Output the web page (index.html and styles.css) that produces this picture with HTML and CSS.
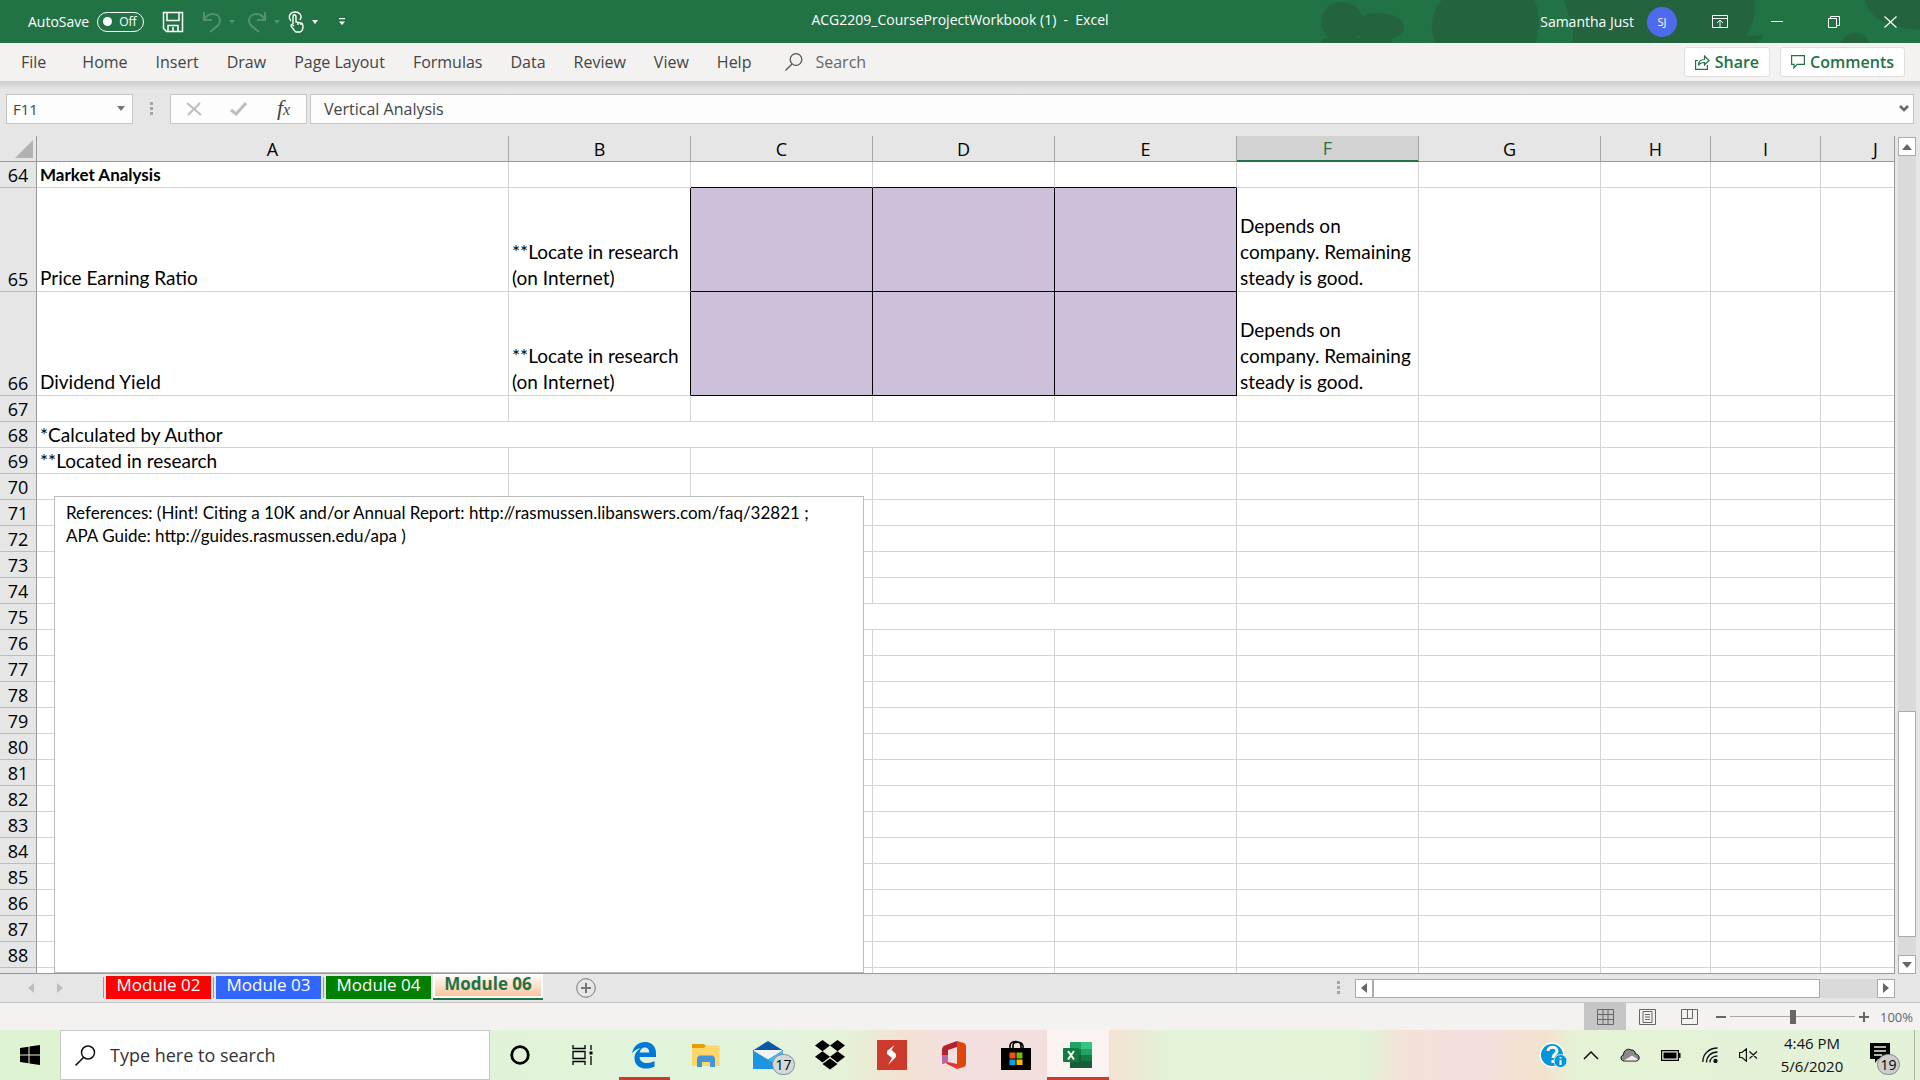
FILE: index.html
```html
<!DOCTYPE html>
<html lang="en">
<head>
<meta charset="utf-8">
<title>ACG2209_CourseProjectWorkbook (1) - Excel</title>
<link rel="stylesheet" href="styles.css">
</head>
<body>
<header class="titlebar">
  <div class="quick">
    <label class="autosave">AutoSave <span class="toggle"><input type="checkbox" class="toggle-input"><span class="knob"></span>Off</span></label>
    <button class="tool" aria-label="Save"><svg width="22" height="22" viewBox="0 0 22 22" fill="none" stroke="#fff" stroke-width="1.500"><path d="M1.500 1.500h19v19h-16l-3-3zM5 1.500v8h12v-8M6 20.500v-6h10v6M11 16v4"/></svg></button>
    <button class="tool faded undo" aria-label="Undo"><svg width="20" height="22" viewBox="0 0 20 22" fill="none" stroke="#fff" stroke-width="2"><path d="M2 1v8h8M2 9c4-8 16-8 16 1 0 4-4 6-10 11"/></svg></button>
    <span class="caret faded"></span>
    <button class="tool faded redo" aria-label="Redo"><svg width="20" height="22" viewBox="0 0 20 22" fill="none" stroke="#fff" stroke-width="2"><path d="M18 1v8h-8M18 9C14 1 2 1 2 10c0 4 4 6 10 11"/></svg></button>
    <span class="caret faded"></span>
    <button class="tool touch" aria-label="Touch mode"><svg width="17" height="22" viewBox="0 0 17 22" fill="none" stroke="#fff" stroke-width="1.400"><path d="M3 10C-1 5 3 1 7 1s8 3 5 8M5 13V6c0-3 3-3 3 0v5l5 1c2 0 2 2 2 4 0 3-2 5-3 5H8c-2-1-3-4-5-6 0-2 1-2 3 0M10 11v3M13 12v2"/></svg></button>
    <span class="caret"></span>
    <button class="tool customize" aria-label="Customize toolbar"><svg width="6" height="8" viewBox="0 0 6 8" fill="#fff"><path d="M0 0h6v1.200H0zM0 3.500h6L3 7z"/></svg></button>
  </div>
  <h1 class="doc-title">ACG2209_CourseProjectWorkbook (1)&nbsp; -&nbsp; Excel</h1>
  <div class="account">
    <svg class="pattern" width="640" height="43" viewBox="0 0 640 43" aria-hidden="true"><g fill="#23643f"><ellipse cx="62" cy="22" rx="21" ry="20"/><ellipse cx="98" cy="27" rx="26" ry="14"/><path d="M44 38h68v5H40z"/><path d="M156 43c-8-12-4-34 6-43h92c8 14 4 30 2 43z"/><path d="M292 43c4-10-4-27-8-43h190c3 16-3 26-8 36l18-1-6 8z"/><path d="M560 43c8-14 22-14 30 0z"/><path d="M585 0c4 20 26 28 55 30V0z"/></g></svg>
    <span class="user">Samantha Just</span>
    <span class="avatar">SJ</span>
    <button class="win" aria-label="Ribbon display options"><svg width="16" height="14" viewBox="0 0 16 14" fill="none" stroke="#fff"><path d="M.5.5h15v12H.5zM.5 3.500h15M8 12V5M5 8l3-3 3 3"/></svg></button>
    <button class="win" aria-label="Minimize"><svg width="12" height="12" viewBox="0 0 12 12" stroke="#fff"><path d="M0 5.500h12"/></svg></button>
    <button class="win" aria-label="Restore"><svg width="12" height="12" viewBox="0 0 12 12" fill="none" stroke="#fff"><path d="M.5 2.500h8v9h-8zM2.500 2V.5h9v9H9"/></svg></button>
    <button class="win" aria-label="Close"><svg width="13" height="12" viewBox="0 0 13 12" stroke="#fff" stroke-width="1.200"><path d="M.5.5l12 11M12.500.5l-12 11"/></svg></button>
  </div>
</header>

<nav class="ribbon">
  <button class="menu file">File</button><button class="menu">Home</button><button class="menu">Insert</button><button class="menu">Draw</button><button class="menu">Page Layout</button><button class="menu">Formulas</button><button class="menu">Data</button><button class="menu">Review</button><button class="menu">View</button><button class="menu">Help</button>
  <button class="menu find"><svg width="18" height="18" viewBox="0 0 18 18" fill="none" stroke="#555" stroke-width="1.300"><circle cx="11" cy="6.500" r="5.800"/><path d="M7 11l-6.500 6.500"/></svg>Search</button>
  <span class="grow"></span>
  <button class="pill"><svg width="15" height="15" viewBox="0 0 15 15" fill="none" stroke="#217346" stroke-width="1.200"><path d="M3 5.500H.600v8.900h11.800V10M3.500 10.500c0-4 2-6 6-6V1l4.500 4.500L9.500 10V7.500c-3 0-5 1-6 3z"/></svg>Share</button>
  <button class="pill"><svg width="14" height="14" viewBox="0 0 14 14" fill="none" stroke="#217346" stroke-width="1.200"><path d="M.6.6h12.800v8.800H6L3 12.800V9.400H.6z"/></svg>Comments</button>
</nav>

<section class="formula-row">
  <div class="namebox"><input class="name-input" aria-label="Name box" value="F11"><span class="caret dark"></span></div>
  <svg class="grip" width="3" height="14" viewBox="0 0 3 14" fill="#a6a6a6"><path d="M0 0h3v3H0zM0 5h3v3H0zM0 10h3v3H0z"/></svg>
  <div class="fx-box">
    <button class="fx" aria-label="Cancel"><svg width="16" height="14" viewBox="0 0 16 14" stroke="#bdbdbd" stroke-width="2"><path d="M1 1l14 12M14 1L2 13"/></svg></button>
    <button class="fx" aria-label="Enter"><svg width="17" height="14" viewBox="0 0 17 14" fill="none" stroke="#bdbdbd" stroke-width="3"><path d="M1 8l5 4L16 1"/></svg></button>
    <button class="fx italic" aria-label="Insert function">f<span class="sub">x</span></button>
  </div>
  <div class="formula"><input class="formula-input" aria-label="Formula" value="Vertical Analysis"><svg width="10" height="7" viewBox="0 0 10 7" fill="none" stroke="#666" stroke-width="2.600"><path d="M1 1l4 4 4-4"/></svg></div>
</section>

<main class="work">
  <div class="sheet">
    <table class="grid">
      <colgroup><col class="c-head"><col class="c-a"><col class="c-m"><col class="c-m"><col class="c-m"><col class="c-m"><col class="c-m"><col class="c-m"><col class="c-s"><col class="c-s"><col class="c-s"></colgroup>
      <thead><tr><th class="corner"><svg width="18" height="18" viewBox="0 0 18 18" fill="#b2b2b2"><path d="M18 0v18H0z"/></svg></th><th>A</th><th>B</th><th>C</th><th>D</th><th>E</th><th class="current">F</th><th>G</th><th>H</th><th>I</th><th>J</th></tr></thead>
      <tbody id="rows">
        <tr class="above"><th>64</th><td class="bold">Market Analysis</td><td></td><td></td><td></td><td></td><td></td><td></td><td></td><td></td><td></td></tr>
        <tr class="tall"><th>65</th><td>Price Earning Ratio</td><td class="pre">**Locate in research (on Internet)</td><td class="fill"></td><td class="fill"></td><td class="fill"></td><td>Depends on company. Remaining steady is good.</td><td></td><td></td><td></td><td></td></tr>
        <tr class="tall"><th>66</th><td>Dividend Yield</td><td class="pre">**Locate in research (on Internet)</td><td class="fill"></td><td class="fill"></td><td class="fill"></td><td>Depends on company. Remaining steady is good.</td><td></td><td></td><td></td><td></td></tr>
        <tr><th>67</th><td></td><td></td><td></td><td></td><td></td><td></td><td></td><td></td><td></td><td></td></tr>
        <tr><th>68</th><td colspan="5">*Calculated by Author</td><td></td><td></td><td></td><td></td><td></td></tr>
        <tr><th>69</th><td>**Located in research</td><td></td><td></td><td></td><td></td><td></td><td></td><td></td><td></td><td></td></tr>
      </tbody>
    </table>
    <div class="note">References: (Hint! Citing a 10K and/or Annual Report: http://rasmussen.libanswers.com/faq/32821 ;<br>APA Guide: http://guides.rasmussen.edu/apa )</div>
  </div>
  <div class="vscroll">
    <button class="sbtn" aria-label="Scroll up"><svg width="10" height="6" viewBox="0 0 10 6" fill="#666"><path d="M0 6l5-6 5 6z"/></svg></button>
    <div class="vtrack"><div class="vthumb"></div></div>
    <button class="sbtn" aria-label="Scroll down"><svg width="10" height="6" viewBox="0 0 10 6" fill="#666"><path d="M0 0l5 6 5-6z"/></svg></button>
  </div>
</main>

<nav class="tabs">
  <button class="arrow" aria-label="Previous sheet"><svg width="6" height="10" viewBox="0 0 6 10" fill="#bcbcbc"><path d="M6 0v10L0 5z"/></svg></button>
  <button class="arrow" aria-label="Next sheet"><svg width="6" height="10" viewBox="0 0 6 10" fill="#bcbcbc"><path d="M0 0v10l6-5z"/></svg></button>
  <div class="tablist">
    <span class="slot"><button class="tab red">Module 02</button></span><span class="slot"><button class="tab blue">Module 03</button></span><span class="slot"><button class="tab green">Module 04</button></span><button class="tab active">Module 06</button>
  </div>
  <button class="add" aria-label="New sheet"><svg width="20" height="20" viewBox="0 0 20 20" fill="none" stroke="#777"><circle cx="10" cy="10" r="9.300"/><path d="M10 5v10M5 10h10" stroke-width="2"/></svg></button>
  <span class="grow"></span>
  <svg class="grip" width="3" height="14" viewBox="0 0 3 14" fill="#a6a6a6"><path d="M0 0h3v3H0zM0 5h3v3H0zM0 10h3v3H0z"/></svg>
  <div class="hscroll">
    <button class="sbtn" aria-label="Scroll left"><svg width="6" height="10" viewBox="0 0 6 10" fill="#666"><path d="M6 0v10L0 5z"/></svg></button>
    <div class="htrack"><div class="hthumb"></div></div>
    <button class="sbtn" aria-label="Scroll right"><svg width="6" height="10" viewBox="0 0 6 10" fill="#666"><path d="M0 0v10l6-5z"/></svg></button>
  </div>
</nav>

<footer class="status">
  <button class="view on" aria-label="Normal"><svg width="17" height="16" viewBox="0 0 17 16" fill="none" stroke="#666"><path d="M.5.5h16v15H.5zM.5 5.500h16M.5 10.500h16M6 .5v15M11 .5v15"/></svg></button>
  <button class="view" aria-label="Page layout"><svg width="17" height="16" viewBox="0 0 17 16" fill="none" stroke="#666"><path d="M.5.5h16v15H.5zM4 2.500h9v11H4zM6 5.500h5M6 8h5M6 10.500h5"/></svg></button>
  <button class="view" aria-label="Page break preview"><svg width="17" height="16" viewBox="0 0 17 16" fill="none" stroke="#666"><path d="M.5.5h16v15H.5zM6.500.5v9M11.500.5v9M.5 9.500h11"/></svg></button>
  <button class="zoom" aria-label="Zoom out"><svg width="10" height="10" viewBox="0 0 10 10" stroke="#666" stroke-width="2"><path d="M0 5h10"/></svg></button>
  <input class="slider" type="range" min="0" max="100" value="50" aria-label="Zoom">
  <button class="zoom" aria-label="Zoom in"><svg width="10" height="10" viewBox="0 0 10 10" stroke="#666" stroke-width="2"><path d="M0 5h10M5 0v10"/></svg></button>
  <span class="percent">100%</span>
</footer>

<div class="taskbar">
  <button class="start" aria-label="Start"><svg width="20" height="20" viewBox="0 0 20 20"><path d="M0 3l8.500-1.200v7.700H0zM9.500 1.600L20 0v9.500H9.500zM0 10.500h8.500v7.700L0 17zM9.500 10.500H20V20L9.500 18.400z"/></svg></button>
  <label class="search"><svg width="21" height="21" viewBox="0 0 21 21" fill="none" stroke="#111" stroke-width="1.500"><circle cx="13" cy="7.500" r="6.500"/><path d="M8.500 12.500L.6 20.400"/></svg><input class="search-input" placeholder="Type here to search" aria-label="Type here to search"></label>
  <button class="app" aria-label="Cortana"><svg width="20" height="20" viewBox="0 0 20 20" fill="none" stroke="#000" stroke-width="2.800"><circle cx="10" cy="10" r="8.300"/></svg></button>
  <button class="app" aria-label="Task view"><svg width="21" height="20" viewBox="0 0 21 20" fill="none" stroke="#000" stroke-width="1.300"><path d="M1 0v3.500h12V0M1 20v-3.500h12V20M1 6.500h12v7H1zM19 0v5M19 11v9"/><path d="M17.500 6.500h3v3h-3z" fill="#000" stroke="none"/></svg></button>
  <button class="app open" aria-label="Edge"><svg width="26" height="28" viewBox="0 0 26 28" fill="#0078d7"><path d="M1 12.500C2.500 5 7.500 1 14 1c7.500 0 11 5.500 11 11v4H8.500c.3 4 3.500 6 7.500 6 3 0 5.500-.8 7.500-2v5.500C21 27 18 27.600 15 27.600c-7 0-11.500-4-11.500-10.600 0-4.500 2.500-8 6.500-9.800-4 .5-7 2.300-9 5.300zM8.700 11.500h9.600c0-3-1.500-5-4.300-5-3 0-4.800 2-5.300 5z"/></svg></button>
  <button class="app" aria-label="File Explorer"><svg width="28" height="24" viewBox="0 0 28 24"><path d="M0 1h12l2 2v4H0z" fill="#dfa000"/><path d="M0 5h12l2-2.500h13.500V23H0z" fill="#ffd667"/><path d="M5 24v-9l2-2.500h14l2 2.500v9h-5v-5h-8v5z" fill="#4296d8"/></svg></button>
  <button class="app" aria-label="Mail"><svg width="30" height="28" viewBox="0 0 30 28"><path d="M0 9.500L15 0l15 9.500V12H0z" fill="#0a58a5"/><path d="M1 9h28v9H1z" fill="#f4f4f4"/><path d="M0 9.500L15 18.500 30 9.500V28H0z" fill="#1c94e0"/><path d="M30 9.500V28L9 15l6 3.500z" fill="#35bdf3"/></svg><span class="badge">17</span></button>
  <button class="app" aria-label="Dropbox"><svg width="30" height="30" viewBox="0 0 30 30"><path d="M7.500 0L15 5.600 7.500 11.200 0 5.600zM22.500 0L30 5.600l-7.500 5.600L15 5.600zM0 16.800l7.500-5.600 7.500 5.600-7.500 5.600zM22.500 11.200l7.500 5.600-7.500 5.600-7.500-5.600zM7.500 24L15 18.600l7.500 5.400L15 29.600z"/></svg></button>
  <button class="app" aria-label="Reader"><svg width="30" height="30" viewBox="0 0 30 30"><path d="M0 0h30v30H0z" fill="#cb3a2b"/><path d="M17.500 5L10 11v3l5 4-4 7 8-8v-3l-4.500-4z" fill="#fff"/></svg></button>
  <button class="app" aria-label="Office"><svg width="24" height="28" viewBox="0 0 24 28"><path d="M15 0L4 4Q0 5 0 9v12q0 3 3 1l3-2V9l9-3z" fill="#b4212e"/><path d="M0 14v7q0 3 3 1l3-2v-6z" fill="#b768a8"/><path d="M15 0l7 2q2 1 2 3v18q0 2-2 3l-7 2z" fill="#e0480b"/><path d="M6 21l9 2v5L5 23q-3-2 1-2z" fill="#e2363c"/></svg></button>
  <button class="app" aria-label="Microsoft Store"><svg width="30" height="30" viewBox="0 0 30 30"><path d="M9 9V6c0-6 11-6 11 0v3M12 8V5c0-4 9-4 10 1v3" fill="none" stroke="#000" stroke-width="1.600"/><path d="M0 8h30v22H0z"/><path d="M8.500 12.500h6v6h-6z" fill="#f25022"/><path d="M15.500 12.500h6v6h-6z" fill="#7fba00"/><path d="M8.500 19.500h6v5.500h-6z" fill="#00a4ef"/><path d="M15.500 19.500h6v5.500h-6z" fill="#ffb900"/></svg></button>
  <button class="app chosen" aria-label="Excel"><svg width="30" height="28" viewBox="0 0 30 28"><path d="M7 1h11v7H7z" fill="#21a366"/><path d="M18 1h11v7H18z" fill="#33c481"/><path d="M7 8h11v6H7z" fill="#107c41"/><path d="M18 8h11v6H18z" fill="#21a366"/><path d="M7 14h22v13H7z" fill="#185c37"/><path d="M18 14h11v6H18z" fill="#107c41"/><rect y="7" width="16" height="14" rx="1" fill="#107c41"/><path d="M5 10l6 8.500M11 10l-6 8.500" stroke="#fff" stroke-width="2"/></svg></button>
  <span class="grow"></span>
  <div class="tray">
    <svg width="30" height="26" viewBox="0 0 30 26"><circle cx="13" cy="13" r="12.500" fill="#fff"/><circle cx="13" cy="13" r="11" fill="#0095d9"/><path d="M9 9c0-5 9-5 9 0 0 3-4 3-4 7M14 18v3" fill="none" stroke="#fff" stroke-width="3"/><circle cx="21.500" cy="19" r="6.500" fill="#0095d9" stroke="#d7eef7"/><path d="M21.500 15v1.500M21.500 18v5" stroke="#fff" stroke-width="2"/></svg>
    <svg width="16" height="9" viewBox="0 0 16 9" fill="none" stroke="#111" stroke-width="1.500"><path d="M1 8l7-7 7 7"/></svg>
    <svg width="20" height="14" viewBox="0 0 20 14"><path d="M4.500 13C0 13 0 7.500 3.500 7 3.500 2 8 0 11 2c2.500-.5 4 1.500 4.500 4C20 6 20.500 13 16 13z" fill="#8a8a8a" stroke="#111"/><path d="M4 12.400L12 7.500l6 4-2 .9z" fill="#eee"/></svg>
    <svg width="20" height="11" viewBox="0 0 20 11"><path d="M.6.6h16.800v9.800H.6z" fill="none" stroke="#000" stroke-width="1.200"/><path d="M2.500 2.500h13v6h-13zM18 3h1.500v5H18z"/></svg>
    <svg width="16" height="16" viewBox="0 0 16 16" fill="none" stroke="#111" stroke-width="1.300"><path d="M.8 15C.8 7 7 1 15.500 1M4.500 15.500C4.500 9.500 9 5 15.500 5M8 15.500C8 11.500 11 9 15.500 9"/><circle cx="13.500" cy="14" r="1.500" fill="#111"/></svg>
    <svg width="19" height="14" viewBox="0 0 19 14" fill="none" stroke="#111" stroke-width="1.200"><path d="M.6 4.500H3L7.400.8v12.400L3 9.500H.6zM10.500 3.500l7.500 7M18 3.500l-7.500 7"/></svg>
  </div>
  <div class="clock"><span>4:46 PM</span><span>5/6/2020</span></div>
  <button class="notify" aria-label="Notifications"><svg width="20" height="21" viewBox="0 0 20 21"><path d="M0 0h20v16H8l-3 4v-4H0z"/><path d="M4 4h12M4 8h12M4 12h8" stroke="#e4f3da" stroke-width="1.300"/></svg><span class="badge">19</span></button>
</div>
<script src="rows.js"></script>
</body>
</html>
```
FILE: styles.css
```css
* { box-sizing: border-box; }
body { margin: 0; height: 100vh; display: flex; flex-direction: column; overflow: hidden; background: #e6e6e6; font: 16px "Open Sans", "Noto Sans", sans-serif; color: #444; }
button { border: 0; background: none; padding: 0; margin: 0; font: inherit; color: inherit; display: flex; align-items: center; justify-content: center; white-space: nowrap; }
input { font: inherit; color: inherit; border: 0; background: none; padding: 0; margin: 0; min-width: 0; outline: 0; }
svg { display: block; flex: none; }
.grow { flex: 1; }

.titlebar { flex: none; height: 43px; display: grid; grid-template-columns: 1fr auto 1fr; align-items: center; background: #217346; color: #fff; font-size: 14px; }
.quick { display: flex; align-items: center; padding-left: 28px; }
.autosave { display: flex; align-items: center; gap: 8px; }
.toggle { width: 47px; height: 20px; border: 1px solid #fff; border-radius: 10px; display: flex; align-items: center; gap: 7px; padding-left: 5px; font-size: 12px; }
.toggle-input { position: absolute; opacity: 0; }
.knob { width: 9px; height: 9px; border-radius: 50%; background: #fff; }
.tool { margin-left: 18px; }
.redo { margin-left: 12px; }
.touch { margin-left: 8px; }
.customize { margin-left: 21px; }
.faded { opacity: .22; }
.caret { margin-left: 7px; border: 3px solid transparent; border-top: 4px solid currentColor; border-bottom: 0; }
.caret.dark { border-width: 5px 4px 0; color: #777; margin: 0; }
.doc-title { margin: 0; font-size: 14px; font-weight: 400; line-height: 20px; padding-bottom: 3px; }
.account { position: relative; height: 43px; display: flex; align-items: center; justify-content: flex-end; padding-right: 1px; overflow: hidden; }
.account > * { position: relative; }
.account .pattern { position: absolute; right: 0; top: 0; }
.avatar { width: 30px; height: 30px; border-radius: 50%; background: #4f6bed; display: flex; align-items: center; justify-content: center; font-size: 11px; margin: 0 14px 0 13px; }
.win { width: 57px; height: 43px; }

.ribbon { flex: none; height: 38px; display: flex; align-items: center; background: #f3f2f1; padding: 0 15px 0 21px; gap: 28px; }
.file { margin-right: 8px; }
.find { gap: 12px; color: #666; margin-left: 6px; }
.pill { height: 30px; padding: 0 10px; gap: 5px; background: #fff; border: 1px solid #e1dfdd; border-radius: 3px; color: #217346; font-weight: 600; margin-left: -18px; }

.formula-row { flex: none; height: 55px; display: flex; align-items: center; padding: 0 6px; background: linear-gradient(#cdcdcd, #e6e6e6 9px); font-size: 16px; }
.namebox { width: 127px; height: 30px; background: #fdfdfd; border: 1px solid #c6c6c6; display: flex; align-items: center; padding: 0 7px 0 6px; }
.name-input { flex: 1; font-size: 15px; }
.grip { margin: 0 17px; }
.fx-box { width: 137px; height: 30px; background: #fdfdfd; border: 1px solid #c6c6c6; display: flex; }
.fx { flex: 1; }
.italic { font: italic 22px "Liberation Serif", serif; color: #444; padding-bottom: 2px; }
.sub { font-size: 16px; padding-top: 4px; }
.formula { flex: 1; margin-left: 3px; height: 30px; background: #fdfdfd; border: 1px solid #c6c6c6; display: flex; align-items: center; padding: 0 4px 0 13px; }
.formula-input { flex: 1; }

.work { flex: 1; min-height: 0; display: flex; justify-content: space-between; }
.sheet { position: relative; flex: 1; overflow: hidden; border-right: 1px solid #999; border-bottom: 1px solid #999; margin-right: 3px; background: #fff; font: 19px/26px Lato, sans-serif; color: #000; }
.grid { border-collapse: separate; border-spacing: 0; table-layout: fixed; width: 1931px; }
.c-head { width: 37px; }
.c-a { width: 472px; }
.c-m { width: 182px; }
.c-s { width: 110px; }
.grid th { font: 18px/24px "Open Sans", sans-serif; padding: 0; height: 26px; background: #e6e6e6; border-right: 1px solid #a6a6a6; border-bottom: 1px solid #999; text-align: center; }
.grid tbody th { vertical-align: bottom; border-right-color: #999; border-bottom-color: #bcbcbc; }
.grid .current { background: #d2d2d2; color: #217346; border-bottom: 2px solid #217346; }
.grid .corner { border-right-color: #999; }
.corner svg { margin-left: 15px; }
.grid td { height: 26px; padding: 0 0 0 3px; line-height: 25px; vertical-align: bottom; border-right: 1px solid #d4d4d4; border-bottom: 1px solid #d4d4d4; white-space: nowrap; }
.grid .tall td { height: 104px; white-space: normal; line-height: 26px; }
.grid .fill { background: #ccc0da; border-color: #000; }
.grid .bold { font-weight: 700; font-size: 17px; }
.above td:nth-child(n+4):nth-child(-n+6) { border-bottom-color: #000; }
.grid .tall .pre { border-right-color: #000; }
.note { position: absolute; left: 54px; top: 360px; width: 810px; height: 477px; padding: 4px 11px; background: #fff; border: 1px solid #bcbcbc; font-size: 17px; line-height: 23px; }
.vscroll { width: 18px; margin-right: 4px; display: flex; flex-direction: column; padding-top: 1px; }
.sbtn { flex: none; width: 18px; height: 19px; background: #fff; border: 1px solid #ababab; }
.vtrack { flex: 1; background: #dadada; display: flex; flex-direction: column; justify-content: flex-end; padding-bottom: 18px; }
.vthumb { height: 29%; background: #fff; border: 1px solid #ababab; }

.tabs { flex: none; height: 29px; display: flex; align-items: center; padding-right: 25px; border-bottom: 1px solid #c6c6c6; }
.tabs .grip { margin-right: 15px; }
.arrow { margin-left: 28px; width: 6px; }
.arrow + .arrow { margin-left: 23px; }
.tablist { align-self: stretch; display: flex; margin-left: 40px; font-size: 17px; }
.slot { border-left: 1px solid #999; margin: 3px 1px 4px 0; padding: 0 1px 0 2px; }
.tab { width: 105px; height: 23px; line-height: 17px; align-items: flex-start; color: #fff; margin-top: -1px; }
.red { background: #f00; }
.blue { background: #36f; }
.green { background: #008000; }
.active { width: 110px; height: 24px; margin: 0; line-height: 20px; font-weight: 700; color: #217346; background: linear-gradient(#fff, #fbc49b); border: 2px solid #fff; border-top: 0; box-shadow: 0 2px #217346; }
.add { margin-left: 33px; }
.hscroll { width: 540px; height: 19px; display: flex; }
.htrack { flex: 1; background: #dadada; }
.hthumb { width: 447px; height: 19px; background: #fff; border: 1px solid #ababab; }

.status { flex: none; height: 27px; display: flex; align-items: center; justify-content: flex-end; background: #f3f2f1; padding-right: 7px; font-size: 13px; color: #666; }
.view { width: 42px; height: 27px; }
.on { background: #c6c6c6; }
.zoom { width: 10px; margin: 0 4px; }
.view + .zoom { margin-left: 6px; }
.slider { appearance: none; width: 125px; height: 14px; background: linear-gradient(#a6a6a6, #a6a6a6) center / 100% 1px no-repeat; }
.slider::-webkit-slider-thumb { appearance: none; width: 6px; height: 14px; background: #666; }
.percent { width: 36px; margin-left: 4px; text-align: right; }

.taskbar { flex: none; height: 50px; display: flex; align-items: center; color: #111; background: linear-gradient(90deg, #def3d2 0, #e2f3dc 40%, #e5f2d8 44%, #f3e1d2 47%, #f3dfe0 50%, #f3dfdc 56%, #f3e3d2 58%, #e2f3d8 61%, #e2f3d6 71%, #f3e2d8 73%, #f3dfdf 77%, #f3e3cc 80.500%, #e5f2d6 82%, #e2f2d8 100%); }
.start { width: 60px; height: 50px; }
.search { width: 430px; height: 50px; background: #fff; border: 1px solid #c9c9c9; display: flex; align-items: center; gap: 14px; padding-left: 14px; }
.search-input { flex: 1; font-size: 18px; }
.search-input::placeholder { color: #333; opacity: 1; }
.app { position: relative; width: 62px; height: 50px; }
.search + .app { margin-left: -1px; }
.open { background: linear-gradient(#cc3a29, #cc3a29) bottom / 51px 3px no-repeat; }
.chosen { background: #fbf3f2; box-shadow: inset 0 -3px #cc3a29; }
.badge { position: absolute; right: 4px; bottom: 5px; width: 23px; height: 21px; border-radius: 11px; border: 1px solid #888; background: #d0dadb; color: #000; font-size: 14px; line-height: 19px; text-align: center; }
.tray { display: flex; align-items: center; gap: 21px; }
.tray svg:first-child { margin-right: -7px; }
.clock { width: 90px; margin-left: 9px; display: flex; flex-direction: column; align-items: center; font-size: 15px; line-height: 23px; }
.notify { position: relative; width: 58px; height: 50px; border-right: 1px solid #aab8a4; margin-right: 5px; padding-right: 12px; padding-bottom: 3px; }
.notify .badge { right: 14px; background: #ccc; }
```
FILE: rows.js
```js
const LAST_LABELLED = 88;
const body = document.getElementById("rows");
for (let n = 70; n <= LAST_LABELLED + 1; n++) {
  const row = body.insertRow();
  const head = document.createElement("th");
  if (n <= LAST_LABELLED) head.textContent = n;
  row.append(head);
  if (n === 75) {
    row.insertCell().colSpan = 5;
  }
  const cells = n === 75 ? 5 : 10;
  for (let i = 0; i < cells; i++) row.insertCell();
}
```
